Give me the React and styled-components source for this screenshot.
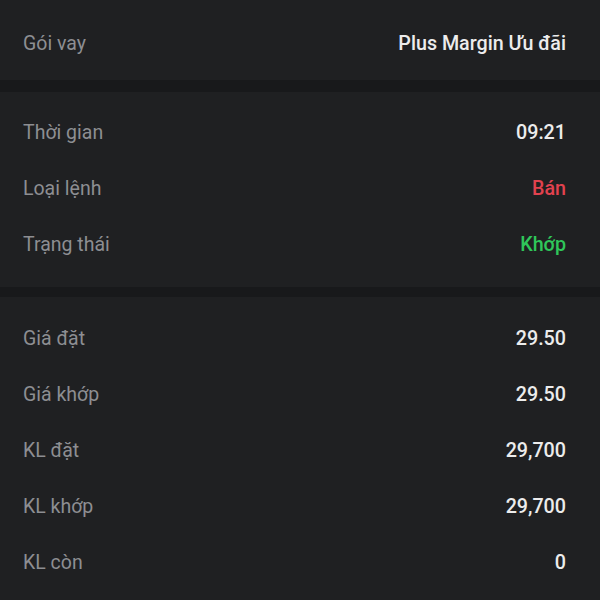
import React from 'react';
import styled, { createGlobalStyle } from 'styled-components';

const GlobalStyle = createGlobalStyle`
  html, body {
    margin: 0;
    padding: 0;
    background: #1f2022;
  }
  body {
    font-family: Roboto, "Noto Sans", sans-serif;
  }
`;

const Page = styled.div`
  width: 600px;
  height: 600px;
  overflow: hidden;
  background: #1f2022;
  display: flex;
  flex-direction: column;
`;

const Section = styled.div`
  display: flex;
  flex-direction: column;
  padding: ${(p) => p.$pad || '12px 0 14px'};
  background: #1f2022;
`;

const Divider = styled.div`
  height: ${(p) => p.$h || 12}px;
  background: #18191b;
  flex-shrink: 0;
`;

const Row = styled.div`
  height: 56px;
  display: flex;
  align-items: center;
  justify-content: space-between;
  padding: 0 34px 0 23px;
`;

const Label = styled.span`
  font-size: 19.5px;
  color: #8d8e92;
`;

const Value = styled.span`
  font-size: 19.7px;
  font-weight: 500;
  color: ${(p) => p.$color || '#ececec'};
`;

const App = () => {
  return (
    <Page>
      <GlobalStyle />
      <Section $pad="15px 0 9px">
        <Row>
          <Label>Gói vay</Label>
          <Value>Plus Margin Ưu đãi</Value>
        </Row>
      </Section>
      <Divider $h={12} />
      <Section $pad="12px 0 15px">
        <Row>
          <Label>Thời gian</Label>
          <Value>09:21</Value>
        </Row>
        <Row>
          <Label>Loại lệnh</Label>
          <Value $color="#e2424f">Bán</Value>
        </Row>
        <Row>
          <Label>Trạng thái</Label>
          <Value $color="#2fc75a">Khớp</Value>
        </Row>
      </Section>
      <Divider $h={10} />
      <Section $pad="13px 0 0">
        <Row>
          <Label>Giá đặt</Label>
          <Value>29.50</Value>
        </Row>
        <Row>
          <Label>Giá khớp</Label>
          <Value>29.50</Value>
        </Row>
        <Row>
          <Label>KL đặt</Label>
          <Value>29,700</Value>
        </Row>
        <Row>
          <Label>KL khớp</Label>
          <Value>29,700</Value>
        </Row>
        <Row>
          <Label>KL còn</Label>
          <Value>0</Value>
        </Row>
      </Section>
    </Page>
  );
};

export default App;
